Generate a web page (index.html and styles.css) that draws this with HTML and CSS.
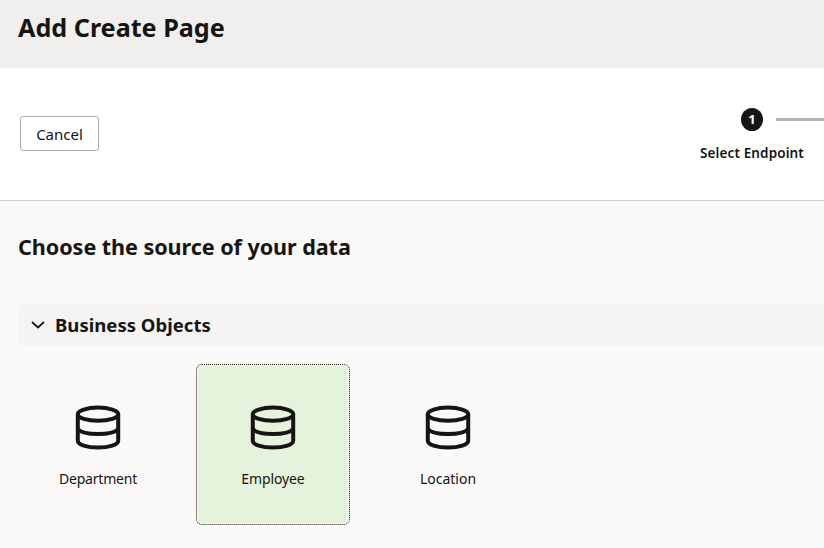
FILE: index.html
```html
<!DOCTYPE html>
<html lang="en">
<head>
<meta charset="utf-8">
<title>Add Create Page</title>
<link rel="stylesheet" href="styles.css">
</head>
<body>
<svg class="defs" aria-hidden="true">
  <symbol id="database" viewBox="0 0 46 46">
    <g fill="none" stroke="#161513" stroke-width="4">
      <ellipse cx="23" cy="9.2" rx="20.2" ry="6.600"/>
      <path d="M2.8 9.200v26.600c0 3.900 9 6.800 20.200 6.800s20.200-2.900 20.200-6.800V9.200"/>
      <path d="M2.8 24c3 3.6 11 5.100 20.2 5.100s17.200-1.500 20.200-5.100"/>
    </g>
  </symbol>
</svg>
<header class="header"><h1 class="title">Add Create Page</h1></header>
<section class="toolbar">
  <button class="cancel"><span>Cancel</span></button>
  <div class="train">
    <div class="step">
      <span class="badge">1</span>
      <span class="step-label">Select Endpoint</span>
    </div>
    <span class="connector"></span>
  </div>
</section>
<main class="content">
  <h2 class="question">Choose the source of your data</h2>
  <div class="group">
    <svg class="chevron" viewBox="0 0 14 8"><path d="M1 1l6 5.500L13 1" fill="none" stroke="#161513" stroke-width="1.700"/></svg>
    <h3 class="group-title">Business Objects</h3>
  </div>
  <div class="cards">
    <div class="card"><svg class="icon"><use href="#database"/></svg><span class="name department">Department</span></div>
    <div class="card selected"><svg class="icon"><use href="#database"/></svg><span class="name employee">Employee</span></div>
    <div class="card"><svg class="icon"><use href="#database"/></svg><span class="name location">Location</span></div>
  </div>
</main>
</body>
</html>
```
FILE: styles.css
```css
* { box-sizing: border-box; }
body {
  margin: 0;
  height: 548px;
  overflow: hidden;
  background: #fbf9f8;
  color: #161513;
  font-family: "Noto Sans", "Open Sans", sans-serif;
}
h1, h2, h3 { margin: 0; font-weight: 700; white-space: nowrap; }
.defs { display: none; }
.header { height: 68px; padding: 9px 18px; background: #f0efed; }
.title { font-size: 25.200px; line-height: 36px; letter-spacing: -0.020px; }
.toolbar {
  display: flex;
  justify-content: space-between;
  align-items: flex-start;
  height: 133px;
  padding-left: 20px;
  background: #fff;
  border-bottom: 1px solid #d1cdc8;
}
.cancel {
  width: 79px;
  height: 35px;
  margin-top: 48px;
  padding: 1px 0 0;
  background: #fff;
  border: 1px solid #aeacab;
  border-radius: 3px;
  color: inherit;
  font: 15px/20px "Noto Sans", sans-serif;
}
.train { display: flex; padding-top: 40px; }
.step { display: flex; flex-direction: column; align-items: center; width: 104px; }
.badge {
  width: 22px;
  height: 23px;
  border-radius: 50%;
  background: #161513;
  color: #fff;
  font-size: 13px;
  font-weight: 700;
  line-height: 23px;
  text-align: center;
}
.step-label { margin-top: 12px; font-size: 13.500px; font-weight: 600; letter-spacing: 0.120px; line-height: 20px; white-space: nowrap; }
.connector { width: 48px; height: 3px; margin: 10px 0 0 -28px; background: #b5b4b3; }
.content { padding: 31px 0 0 18px; }
.question { font-size: 21.600px; line-height: 30px; letter-spacing: -0.070px; }
.group {
  display: flex;
  align-items: center;
  height: 42px;
  margin: 42px 0 0 1px;
  padding-left: 12px;
  background: #f5f4f2;
  border-radius: 4px 0 0 4px;
}
.chevron { width: 14px; height: 8px; margin: -1px 10px 0 0; }
.group-title { font-size: 18.500px; line-height: 26px; letter-spacing: 0.030px; }
.cards { display: flex; gap: 21px; margin: 18px 0 0 3px; }
.card {
  display: flex;
  flex-direction: column;
  align-items: center;
  width: 154px;
  height: 161px;
  padding-top: 40px;
  border: 1px solid transparent;
  border-radius: 6px;
}
.selected { background: #e6f3dc; background-clip: padding-box; border: 1px dotted #161513; box-shadow: inset 0 0 0 1px #f4f8ee; }
.icon { width: 46px; height: 46px; }
.name { margin-top: 18px; font-size: 14px; line-height: 20px; }
.department { letter-spacing: -0.200px; }
.employee { letter-spacing: -0.120px; }
```
